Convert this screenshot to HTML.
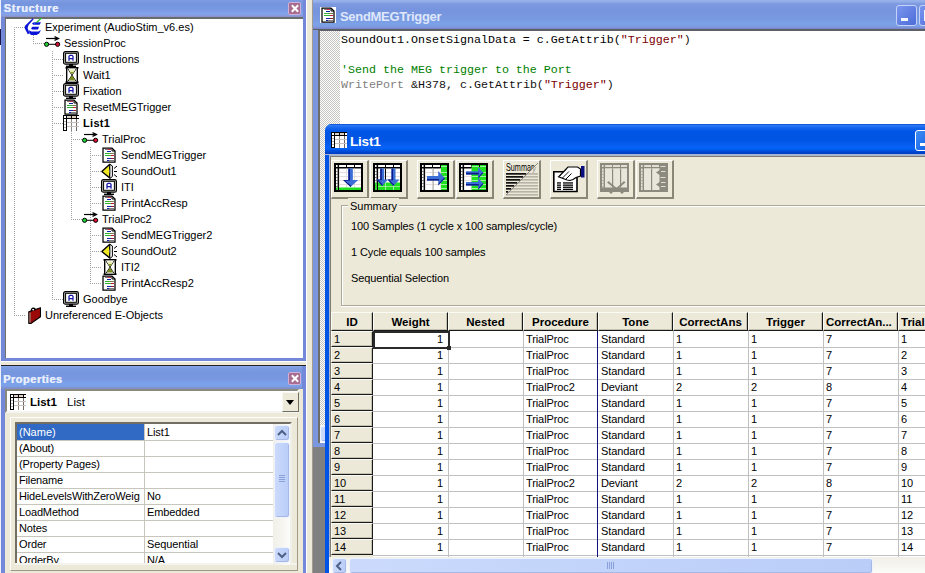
<!DOCTYPE html><html><head><meta charset="utf-8"><style>
*{margin:0;padding:0;box-sizing:border-box}
html,body{width:925px;height:573px;overflow:hidden;background:#ece9d8;font-family:"Liberation Sans", sans-serif;font-size:11px;color:#000}
.a{position:absolute}
.t{position:absolute;white-space:nowrap;line-height:16px}
.dv{position:absolute;width:1px;background:repeating-linear-gradient(to bottom,#a0a0a0 0 1px,transparent 1px 2px)}
.dh{position:absolute;height:1px;background:repeating-linear-gradient(to right,#a0a0a0 0 1px,transparent 1px 2px)}
.ttl{position:absolute;font-weight:bold;color:#e8eefc;white-space:nowrap}
.cls{position:absolute;width:13px;height:13px;background:#a86c90;border:1px solid #d0b0d8;border-radius:2px}
.cls:before,.cls:after{content:"";position:absolute;left:5px;top:1px;width:2px;height:9px;background:#fff;transform:rotate(45deg)}
.cls:after{transform:rotate(-45deg)}
</style></head><body>

<div class="a" style="left:0;top:0;width:1px;height:573px;background:#eef0fc"></div>
<div class="a" style="left:0;top:29px;width:1px;height:16px;background:#181848"></div>
<div class="a" style="left:1px;top:0;width:305px;height:361px;background:#7488da"></div>
<div class="a" style="left:1px;top:0;width:302px;height:17px;background:linear-gradient(#7e9ce2 0,#7594de 4px,#7898e2 10px,#84a4ec 14px,#8898d8 16px,#9090c0 17px)"></div>
<div class="ttl" style="left:3.5px;top:0.5px;font-size:11px;letter-spacing:0.7px;text-shadow:0.5px 0 0 #e4ecfc;line-height:15px">Structure</div>
<div class="cls" style="left:288px;top:2px"></div>
<div class="a" style="left:5px;top:17px;width:298px;height:341px;background:#fff;border-top:2px solid #686c70;border-left:1px solid #707468"></div>
<div class="dh" style="left:14px;top:27px;width:11px"></div>
<div class="a" style="left:22px;top:16px;width:22px;height:22px"><svg width="22" height="22" viewBox="0 0 22 22"><path d="M10.8 2.3 L11.6 3.2 L6.6 9 L5.6 12 L7.5 17.2 L5.8 18.2 L2.8 12.6 L2.8 10 Z" fill="#0a14d8"/><path d="M10 7.3 L12 6.2 H19 L17.6 8.8 H11.2 Z" fill="#0a14d8"/><path d="M12 6.8 L13.6 6.6 L12.6 8 Z" fill="#40a0ff"/><path d="M9 12.3 L10.5 10.8 H17 L16 13.5 H10 Z" fill="#0a14d8"/><path d="M7 14.2 L9.5 15.6 H16.5 L19 14 L17.2 17.6 L14.5 19 H9.2 L7.4 17.6 Z" fill="#0a14d8"/><path d="M13.5 6.6 L18.5 2 H20.5 L15.5 6.6 Z" fill="#30c030"/></svg></div>
<div class="t" style="left:45px;top:19px;">Experiment (AudioStim_v6.es)</div>
<div class="dh" style="left:33px;top:43px;width:11px"></div>
<div class="a" style="left:44px;top:36px;width:17px;height:11px"><svg width="17" height="11" viewBox="0 0 17 11"><path d="M2 2.5 H14.5" stroke="#000" stroke-width="1.2"/><path d="M10.5 0.6 L14.5 2.5 L10.5 4.4" stroke="#000" stroke-width="1.2" fill="none"/><path d="M4 8.3 H12" stroke="#000" stroke-width="1"/><circle cx="2.6" cy="8.3" r="2.1" fill="#20d030" stroke="#000" stroke-width="1"/><circle cx="13.6" cy="8.3" r="2.1" fill="#d81030" stroke="#000" stroke-width="1"/></svg></div>
<div class="t" style="left:64px;top:35px;">SessionProc</div>
<div class="dh" style="left:52px;top:59px;width:11px"></div>
<div class="a" style="left:63px;top:51px;width:16px;height:16px"><svg width="16" height="16" viewBox="0 0 16 16"><rect x="0.6" y="0.6" width="14.8" height="12.6" rx="1.8" fill="#c8c8c0" stroke="#000" stroke-width="1.2"/><rect x="2.6" y="2.3" width="10.8" height="9" fill="#fff" stroke="#000" stroke-width="1"/><path d="M6 9.8 V5.2 L7 4.3 H9 L10 5.2 V9.8 M6 7.6 H10" fill="none" stroke="#1a1aa8" stroke-width="1.3"/><rect x="6" y="13" width="4" height="2" fill="#000"/><rect x="3" y="14.6" width="10" height="1.4" fill="#000"/></svg></div>
<div class="t" style="left:83px;top:51px;">Instructions</div>
<div class="dh" style="left:52px;top:75px;width:11px"></div>
<div class="a" style="left:65px;top:67px;width:14px;height:16px"><svg width="14" height="16" viewBox="0 0 14 16"><rect x="0.5" y="0" width="13" height="1.6" fill="#000"/><rect x="0.5" y="14.4" width="13" height="1.6" fill="#000"/><rect x="1" y="0" width="1.6" height="16" fill="#000"/><rect x="11.4" y="0" width="1.6" height="16" fill="#000"/><rect x="2.6" y="1.6" width="8.8" height="12.8" fill="#fff"/><path d="M3 2 L10.8 14 M11 2 L3.2 14" stroke="#000" stroke-width="0.9"/><path d="M3.6 2.4 H10.4 L7 7.4 Z" fill="#e8ecb0"/><path d="M5 5 H9 L7 7.6 Z" fill="#8a9a30"/><path d="M7 8.6 L10.4 13.6 H3.6 Z" fill="#7a8a20"/></svg></div>
<div class="t" style="left:83px;top:67px;">Wait1</div>
<div class="dh" style="left:52px;top:91px;width:11px"></div>
<div class="a" style="left:63px;top:83px;width:16px;height:16px"><svg width="16" height="16" viewBox="0 0 16 16"><rect x="0.6" y="0.6" width="14.8" height="12.6" rx="1.8" fill="#c8c8c0" stroke="#000" stroke-width="1.2"/><rect x="2.6" y="2.3" width="10.8" height="9" fill="#fff" stroke="#000" stroke-width="1"/><path d="M6 9.8 V5.2 L7 4.3 H9 L10 5.2 V9.8 M6 7.6 H10" fill="none" stroke="#1a1aa8" stroke-width="1.3"/><rect x="6" y="13" width="4" height="2" fill="#000"/><rect x="3" y="14.6" width="10" height="1.4" fill="#000"/></svg></div>
<div class="t" style="left:83px;top:83px;">Fixation</div>
<div class="dh" style="left:52px;top:107px;width:11px"></div>
<div class="a" style="left:64px;top:99px;width:14px;height:16px"><svg width="14" height="16" viewBox="0 0 14 16"><path d="M1 1 H10 L13 4 V15 H1 Z" fill="#fff" stroke="#000" stroke-width="1.25"/><path d="M10 1 V4 H13" fill="none" stroke="#000" stroke-width="1"/><g shape-rendering="crispEdges"><rect x="3" y="2" width="3" height="1" fill="#907070"/><rect x="6" y="2" width="3" height="1" fill="#c03050"/><rect x="5" y="4" width="4" height="1" fill="#1020a0"/><rect x="3" y="6" width="5" height="1" fill="#30b030"/><rect x="8" y="6" width="4" height="1" fill="#708050"/><rect x="3" y="8" width="6" height="1" fill="#30b030"/><rect x="9" y="8" width="3" height="1" fill="#c02030"/><rect x="5" y="11" width="4" height="1" fill="#1020a0"/><rect x="9" y="11" width="3" height="1" fill="#802030"/><rect x="5" y="13" width="2" height="1" fill="#1020a0"/><rect x="7" y="13" width="5" height="1" fill="#808080"/></g></svg></div>
<div class="t" style="left:83px;top:99px;">ResetMEGTrigger</div>
<div class="dh" style="left:52px;top:123px;width:11px"></div>
<div class="a" style="left:63px;top:115px;width:16px;height:16px"><svg width="16" height="16" viewBox="0 0 16 16" shape-rendering="crispEdges"><rect x="0" y="0" width="16" height="16" fill="#fff"/><rect x="0" y="0" width="16" height="1" fill="#000"/><rect x="0" y="3" width="16" height="1" fill="#000"/><rect x="0" y="0" width="1" height="16" fill="#000"/><rect x="3" y="0" width="1" height="16" fill="#000"/><rect x="0" y="15" width="4" height="1" fill="#000"/><rect x="8" y="0" width="1" height="4" fill="#000"/><rect x="13" y="0" width="1" height="4" fill="#000"/><rect x="8" y="4" width="1" height="12" fill="#908880"/><rect x="13" y="4" width="1" height="12" fill="#706860"/><rect x="4" y="1" width="4" height="2" fill="#d8d0c8"/><rect x="9" y="1" width="4" height="2" fill="#e0d0c0"/><rect x="4" y="7" width="12" height="1" fill="#c8c0c0"/><rect x="4" y="11" width="12" height="1" fill="#c8c0c0"/><rect x="1" y="6" width="2" height="1" fill="#b0b0b0"/><rect x="1" y="9" width="2" height="1" fill="#b0b0b0"/><rect x="1" y="12" width="2" height="1" fill="#b0b0b0"/></svg></div>
<div class="t" style="left:83px;top:115px;font-weight:bold;letter-spacing:0.3px;">List1</div>
<div class="dh" style="left:71px;top:139px;width:11px"></div>
<div class="a" style="left:82px;top:132px;width:17px;height:11px"><svg width="17" height="11" viewBox="0 0 17 11"><path d="M2 2.5 H14.5" stroke="#000" stroke-width="1.2"/><path d="M10.5 0.6 L14.5 2.5 L10.5 4.4" stroke="#000" stroke-width="1.2" fill="none"/><path d="M4 8.3 H12" stroke="#000" stroke-width="1"/><circle cx="2.6" cy="8.3" r="2.1" fill="#20d030" stroke="#000" stroke-width="1"/><circle cx="13.6" cy="8.3" r="2.1" fill="#d81030" stroke="#000" stroke-width="1"/></svg></div>
<div class="t" style="left:102px;top:131px;">TrialProc</div>
<div class="dh" style="left:90px;top:155px;width:11px"></div>
<div class="a" style="left:102px;top:147px;width:14px;height:16px"><svg width="14" height="16" viewBox="0 0 14 16"><path d="M1 1 H10 L13 4 V15 H1 Z" fill="#fff" stroke="#000" stroke-width="1.25"/><path d="M10 1 V4 H13" fill="none" stroke="#000" stroke-width="1"/><g shape-rendering="crispEdges"><rect x="3" y="2" width="3" height="1" fill="#907070"/><rect x="6" y="2" width="3" height="1" fill="#c03050"/><rect x="5" y="4" width="4" height="1" fill="#1020a0"/><rect x="3" y="6" width="5" height="1" fill="#30b030"/><rect x="8" y="6" width="4" height="1" fill="#708050"/><rect x="3" y="8" width="6" height="1" fill="#30b030"/><rect x="9" y="8" width="3" height="1" fill="#c02030"/><rect x="5" y="11" width="4" height="1" fill="#1020a0"/><rect x="9" y="11" width="3" height="1" fill="#802030"/><rect x="5" y="13" width="2" height="1" fill="#1020a0"/><rect x="7" y="13" width="5" height="1" fill="#808080"/></g></svg></div>
<div class="t" style="left:121px;top:147px;">SendMEGTrigger</div>
<div class="dh" style="left:90px;top:171px;width:11px"></div>
<div class="a" style="left:101px;top:163px;width:17px;height:16px"><svg width="17" height="16" viewBox="0 0 17 16"><path d="M0.8 8.5 L8.8 1.2 V15 Z" fill="#f0e820" stroke="#000" stroke-width="1.4" stroke-linejoin="bevel"/><path d="M8.8 1.2 L11.4 3 V13.5 L8.8 15.5 Z" fill="#fff" stroke="#000" stroke-width="1"/><ellipse cx="9.3" cy="8.3" rx="0.9" ry="2.4" fill="#a0a0a0"/><path d="M13 5.5 L16 3 M13 8.5 H16 M13 11.5 L16 14" stroke="#000" stroke-width="1"/></svg></div>
<div class="t" style="left:121px;top:163px;">SoundOut1</div>
<div class="dh" style="left:90px;top:187px;width:11px"></div>
<div class="a" style="left:101px;top:179px;width:16px;height:16px"><svg width="16" height="16" viewBox="0 0 16 16"><rect x="0.6" y="0.6" width="14.8" height="12.6" rx="1.8" fill="#c8c8c0" stroke="#000" stroke-width="1.2"/><rect x="2.6" y="2.3" width="10.8" height="9" fill="#fff" stroke="#000" stroke-width="1"/><path d="M6 9.8 V5.2 L7 4.3 H9 L10 5.2 V9.8 M6 7.6 H10" fill="none" stroke="#1a1aa8" stroke-width="1.3"/><rect x="6" y="13" width="4" height="2" fill="#000"/><rect x="3" y="14.6" width="10" height="1.4" fill="#000"/></svg></div>
<div class="t" style="left:121px;top:179px;">ITI</div>
<div class="dh" style="left:90px;top:203px;width:11px"></div>
<div class="a" style="left:102px;top:195px;width:14px;height:16px"><svg width="14" height="16" viewBox="0 0 14 16"><path d="M1 1 H10 L13 4 V15 H1 Z" fill="#fff" stroke="#000" stroke-width="1.25"/><path d="M10 1 V4 H13" fill="none" stroke="#000" stroke-width="1"/><g shape-rendering="crispEdges"><rect x="3" y="2" width="3" height="1" fill="#907070"/><rect x="6" y="2" width="3" height="1" fill="#c03050"/><rect x="5" y="4" width="4" height="1" fill="#1020a0"/><rect x="3" y="6" width="5" height="1" fill="#30b030"/><rect x="8" y="6" width="4" height="1" fill="#708050"/><rect x="3" y="8" width="6" height="1" fill="#30b030"/><rect x="9" y="8" width="3" height="1" fill="#c02030"/><rect x="5" y="11" width="4" height="1" fill="#1020a0"/><rect x="9" y="11" width="3" height="1" fill="#802030"/><rect x="5" y="13" width="2" height="1" fill="#1020a0"/><rect x="7" y="13" width="5" height="1" fill="#808080"/></g></svg></div>
<div class="t" style="left:121px;top:195px;">PrintAccResp</div>
<div class="dh" style="left:71px;top:219px;width:11px"></div>
<div class="a" style="left:82px;top:212px;width:17px;height:11px"><svg width="17" height="11" viewBox="0 0 17 11"><path d="M2 2.5 H14.5" stroke="#000" stroke-width="1.2"/><path d="M10.5 0.6 L14.5 2.5 L10.5 4.4" stroke="#000" stroke-width="1.2" fill="none"/><path d="M4 8.3 H12" stroke="#000" stroke-width="1"/><circle cx="2.6" cy="8.3" r="2.1" fill="#20d030" stroke="#000" stroke-width="1"/><circle cx="13.6" cy="8.3" r="2.1" fill="#d81030" stroke="#000" stroke-width="1"/></svg></div>
<div class="t" style="left:102px;top:211px;">TrialProc2</div>
<div class="dh" style="left:90px;top:235px;width:11px"></div>
<div class="a" style="left:102px;top:227px;width:14px;height:16px"><svg width="14" height="16" viewBox="0 0 14 16"><path d="M1 1 H10 L13 4 V15 H1 Z" fill="#fff" stroke="#000" stroke-width="1.25"/><path d="M10 1 V4 H13" fill="none" stroke="#000" stroke-width="1"/><g shape-rendering="crispEdges"><rect x="3" y="2" width="3" height="1" fill="#907070"/><rect x="6" y="2" width="3" height="1" fill="#c03050"/><rect x="5" y="4" width="4" height="1" fill="#1020a0"/><rect x="3" y="6" width="5" height="1" fill="#30b030"/><rect x="8" y="6" width="4" height="1" fill="#708050"/><rect x="3" y="8" width="6" height="1" fill="#30b030"/><rect x="9" y="8" width="3" height="1" fill="#c02030"/><rect x="5" y="11" width="4" height="1" fill="#1020a0"/><rect x="9" y="11" width="3" height="1" fill="#802030"/><rect x="5" y="13" width="2" height="1" fill="#1020a0"/><rect x="7" y="13" width="5" height="1" fill="#808080"/></g></svg></div>
<div class="t" style="left:121px;top:227px;">SendMEGTrigger2</div>
<div class="dh" style="left:90px;top:251px;width:11px"></div>
<div class="a" style="left:101px;top:243px;width:17px;height:16px"><svg width="17" height="16" viewBox="0 0 17 16"><path d="M0.8 8.5 L8.8 1.2 V15 Z" fill="#f0e820" stroke="#000" stroke-width="1.4" stroke-linejoin="bevel"/><path d="M8.8 1.2 L11.4 3 V13.5 L8.8 15.5 Z" fill="#fff" stroke="#000" stroke-width="1"/><ellipse cx="9.3" cy="8.3" rx="0.9" ry="2.4" fill="#a0a0a0"/><path d="M13 5.5 L16 3 M13 8.5 H16 M13 11.5 L16 14" stroke="#000" stroke-width="1"/></svg></div>
<div class="t" style="left:121px;top:243px;">SoundOut2</div>
<div class="dh" style="left:90px;top:267px;width:11px"></div>
<div class="a" style="left:103px;top:259px;width:14px;height:16px"><svg width="14" height="16" viewBox="0 0 14 16"><rect x="0.5" y="0" width="13" height="1.6" fill="#000"/><rect x="0.5" y="14.4" width="13" height="1.6" fill="#000"/><rect x="1" y="0" width="1.6" height="16" fill="#000"/><rect x="11.4" y="0" width="1.6" height="16" fill="#000"/><rect x="2.6" y="1.6" width="8.8" height="12.8" fill="#fff"/><path d="M3 2 L10.8 14 M11 2 L3.2 14" stroke="#000" stroke-width="0.9"/><path d="M3.6 2.4 H10.4 L7 7.4 Z" fill="#e8ecb0"/><path d="M5 5 H9 L7 7.6 Z" fill="#8a9a30"/><path d="M7 8.6 L10.4 13.6 H3.6 Z" fill="#7a8a20"/></svg></div>
<div class="t" style="left:121px;top:259px;">ITI2</div>
<div class="dh" style="left:90px;top:283px;width:11px"></div>
<div class="a" style="left:102px;top:275px;width:14px;height:16px"><svg width="14" height="16" viewBox="0 0 14 16"><path d="M1 1 H10 L13 4 V15 H1 Z" fill="#fff" stroke="#000" stroke-width="1.25"/><path d="M10 1 V4 H13" fill="none" stroke="#000" stroke-width="1"/><g shape-rendering="crispEdges"><rect x="3" y="2" width="3" height="1" fill="#907070"/><rect x="6" y="2" width="3" height="1" fill="#c03050"/><rect x="5" y="4" width="4" height="1" fill="#1020a0"/><rect x="3" y="6" width="5" height="1" fill="#30b030"/><rect x="8" y="6" width="4" height="1" fill="#708050"/><rect x="3" y="8" width="6" height="1" fill="#30b030"/><rect x="9" y="8" width="3" height="1" fill="#c02030"/><rect x="5" y="11" width="4" height="1" fill="#1020a0"/><rect x="9" y="11" width="3" height="1" fill="#802030"/><rect x="5" y="13" width="2" height="1" fill="#1020a0"/><rect x="7" y="13" width="5" height="1" fill="#808080"/></g></svg></div>
<div class="t" style="left:121px;top:275px;">PrintAccResp2</div>
<div class="dh" style="left:52px;top:299px;width:11px"></div>
<div class="a" style="left:63px;top:291px;width:16px;height:16px"><svg width="16" height="16" viewBox="0 0 16 16"><rect x="0.6" y="0.6" width="14.8" height="12.6" rx="1.8" fill="#c8c8c0" stroke="#000" stroke-width="1.2"/><rect x="2.6" y="2.3" width="10.8" height="9" fill="#fff" stroke="#000" stroke-width="1"/><path d="M6 9.8 V5.2 L7 4.3 H9 L10 5.2 V9.8 M6 7.6 H10" fill="none" stroke="#1a1aa8" stroke-width="1.3"/><rect x="6" y="13" width="4" height="2" fill="#000"/><rect x="3" y="14.6" width="10" height="1.4" fill="#000"/></svg></div>
<div class="t" style="left:83px;top:291px;">Goodbye</div>
<div class="dh" style="left:14px;top:315px;width:11px"></div>
<div class="a" style="left:25px;top:307px;width:16px;height:17px"><svg width="16" height="17" viewBox="0 0 16 17"><path d="M3.8 4.8 L15.5 0.8 V9.8 L5.8 16.5 H3.8 Z" fill="#9a0808" stroke="#000" stroke-width="1.1" stroke-linejoin="round"/><path d="M5 5.6 V15.6" stroke="#98a898" stroke-width="1"/><path d="M6.3 4.2 Q6.2 1 8.8 1.2 Q10.5 1.6 10 3.2" fill="none" stroke="#000" stroke-width="1.4"/><circle cx="8.2" cy="2.8" r="0.8" fill="#fff"/></svg></div>
<div class="t" style="left:45px;top:307px;">Unreferenced E-Objects</div>
<div class="dv" style="left:14px;top:27px;height:288px"></div>
<div class="dv" style="left:33px;top:35px;height:8px"></div>
<div class="dv" style="left:52px;top:51px;height:248px"></div>
<div class="dv" style="left:71px;top:131px;height:88px"></div>
<div class="dv" style="left:90px;top:147px;height:136px"></div>
<div class="a" style="left:1px;top:361px;width:305px;height:5px;background:#ece9d8;border-top:1px solid #fff;border-bottom:1px solid #222"></div>
<div class="a" style="left:1px;top:366px;width:305px;height:207px;background:#7488da"></div>
<div class="a" style="left:1px;top:366px;width:301px;height:23px;background:linear-gradient(#8aa8e8 0,#7d9ce2 2px,#7696de 6px,#7898e2 14px,#7aa4ec 18px,#7ca0ea 20px,#8090c8 22px,#8090c8 23px)"></div>
<div class="ttl" style="left:3px;top:371.5px;font-size:11px;letter-spacing:0.5px;text-shadow:0.5px 0 0 #e4ecfc;line-height:15px">Properties</div>
<div class="cls" style="left:288px;top:372px"></div>
<div class="a" style="left:5px;top:389px;width:298px;height:184px;background:#ece9d8"></div>
<div class="a" style="left:5px;top:389px;width:294px;height:24px;background:#fff;border:2px solid #8a8a80;border-right-color:#f4f4f0;border-bottom-color:#f4f4f0"></div>
<div class="a" style="left:10px;top:394px;width:16px;height:16px"><svg width="16" height="16" viewBox="0 0 16 16" shape-rendering="crispEdges"><rect x="0" y="0" width="16" height="16" fill="#fff"/><rect x="0" y="0" width="16" height="1" fill="#000"/><rect x="0" y="3" width="16" height="1" fill="#000"/><rect x="0" y="0" width="1" height="16" fill="#000"/><rect x="3" y="0" width="1" height="16" fill="#000"/><rect x="0" y="15" width="4" height="1" fill="#000"/><rect x="8" y="0" width="1" height="4" fill="#000"/><rect x="13" y="0" width="1" height="4" fill="#000"/><rect x="8" y="4" width="1" height="12" fill="#908880"/><rect x="13" y="4" width="1" height="12" fill="#706860"/><rect x="4" y="1" width="4" height="2" fill="#d8d0c8"/><rect x="9" y="1" width="4" height="2" fill="#e0d0c0"/><rect x="4" y="7" width="12" height="1" fill="#c8c0c0"/><rect x="4" y="11" width="12" height="1" fill="#c8c0c0"/><rect x="1" y="6" width="2" height="1" fill="#b0b0b0"/><rect x="1" y="9" width="2" height="1" fill="#b0b0b0"/><rect x="1" y="12" width="2" height="1" fill="#b0b0b0"/></svg></div>
<div class="t" style="left:30px;top:394px;font-weight:bold;font-size:11.5px">List1</div>
<div class="t" style="left:67px;top:394px;font-size:11.5px">List</div>
<div class="a" style="left:282px;top:392px;width:17px;height:20px;background:#ece9d8;border:1px solid #f8f8f4;border-right-color:#716f64;border-bottom-color:#716f64"></div>
<div class="a" style="left:286px;top:400px;width:0;height:0;border-left:4.5px solid transparent;border-right:4.5px solid transparent;border-top:5px solid #000"></div>
<div class="a" style="left:10px;top:417px;width:288px;height:154px;border:1px solid #fff;border-right-color:#9c988a;border-bottom-color:#9c988a"></div>
<div class="a" style="left:15px;top:422px;width:277px;height:143px;background:#fff;border:2px solid #716f64;border-right-color:#f0f0ea;border-bottom-color:#f0f0ea"></div>
<div class="a" style="left:17px;top:424px;width:127px;height:16px;background:#316ac5"></div>
<div class="t" style="left:19px;top:424px;color:#fff">(Name)</div>
<div class="t" style="left:147px;top:424px;letter-spacing:-0.1px">List1</div>
<div class="a" style="left:17px;top:440px;width:256px;height:1px;background:#c8c6bc"></div>
<div class="t" style="left:19px;top:440px;letter-spacing:-0.15px">(About)</div>
<div class="t" style="left:147px;top:440px;letter-spacing:-0.1px"></div>
<div class="a" style="left:17px;top:456px;width:256px;height:1px;background:#c8c6bc"></div>
<div class="t" style="left:19px;top:456px;letter-spacing:-0.15px">(Property Pages)</div>
<div class="t" style="left:147px;top:456px;letter-spacing:-0.1px"></div>
<div class="a" style="left:17px;top:472px;width:256px;height:1px;background:#c8c6bc"></div>
<div class="t" style="left:19px;top:472px;letter-spacing:-0.15px">Filename</div>
<div class="t" style="left:147px;top:472px;letter-spacing:-0.1px"></div>
<div class="a" style="left:17px;top:488px;width:256px;height:1px;background:#c8c6bc"></div>
<div class="t" style="left:19px;top:488px;letter-spacing:-0.15px">HideLevelsWithZeroWeig</div>
<div class="t" style="left:147px;top:488px;letter-spacing:-0.1px">No</div>
<div class="a" style="left:17px;top:504px;width:256px;height:1px;background:#c8c6bc"></div>
<div class="t" style="left:19px;top:504px;letter-spacing:-0.15px">LoadMethod</div>
<div class="t" style="left:147px;top:504px;letter-spacing:-0.1px">Embedded</div>
<div class="a" style="left:17px;top:520px;width:256px;height:1px;background:#c8c6bc"></div>
<div class="t" style="left:19px;top:520px;letter-spacing:-0.15px">Notes</div>
<div class="t" style="left:147px;top:520px;letter-spacing:-0.1px"></div>
<div class="a" style="left:17px;top:536px;width:256px;height:1px;background:#c8c6bc"></div>
<div class="t" style="left:19px;top:536px;letter-spacing:-0.15px">Order</div>
<div class="t" style="left:147px;top:536px;letter-spacing:-0.1px">Sequential</div>
<div class="a" style="left:17px;top:552px;width:256px;height:1px;background:#c8c6bc"></div>
<div class="t" style="left:19px;top:552px;letter-spacing:-0.15px">OrderBy</div>
<div class="t" style="left:147px;top:552px;letter-spacing:-0.1px">N/A</div>
<div class="a" style="left:17px;top:568px;width:256px;height:1px;background:#c8c6bc"></div>
<div class="a" style="left:144px;top:424px;width:1px;height:140px;background:#c8c6bc"></div>
<div class="a" style="left:15px;top:563px;width:282px;height:2px;background:#f4f3ee"></div>
<div class="a" style="left:11px;top:565px;width:286px;height:5px;background:#ece9d8"></div>
<div class="a" style="left:273px;top:424px;width:17px;height:141px;background:linear-gradient(90deg,#f0efe8,#fbfbf8)"></div>
<div class="a" style="left:274px;top:425px;width:16px;height:16px;background:linear-gradient(90deg,#cbdafc,#b9cdf8);border:1px solid #eef2fd;border-radius:3px;box-shadow:inset -1px -1px 0 #a6b9e6"></div>
<svg class="a" style="left:274px;top:425px" width="16" height="16"><path d="M4 10 L8 6 L12 10" fill="none" stroke="#4d6185" stroke-width="2"/></svg>
<div class="a" style="left:274px;top:442px;width:16px;height:76px;background:linear-gradient(90deg,#cbdafc,#b9cdf8);border:1px solid #eef2fd;border-radius:3px;box-shadow:inset -1px -1px 0 #a6b9e6"></div>
<svg class="a" style="left:274px;top:442px" width="16" height="76"><path d="M5 33.5 H11 M5 35.5 H11 M5 37.5 H11 M5 39.5 H11" stroke="#8aa0d8" stroke-width="1"/></svg>
<div class="a" style="left:274px;top:547px;width:16px;height:16px;background:linear-gradient(90deg,#cbdafc,#b9cdf8);border:1px solid #eef2fd;border-radius:3px;box-shadow:inset -1px -1px 0 #a6b9e6"></div>
<svg class="a" style="left:274px;top:547px" width="16" height="16"><path d="M4 6 L8 10 L12 6" fill="none" stroke="#4d6185" stroke-width="2"/></svg>
<div class="a" style="left:306px;top:0;width:7px;height:573px;background:#ece9d8;border-left:1px solid #fff"></div>
<div class="a" style="left:312px;top:0;width:1px;height:573px;background:#a09d90"></div>
<div class="a" style="left:313px;top:0;width:612px;height:573px;background:#808080"></div>
<div class="a" style="left:313px;top:0;width:612px;height:447px;background:#7b97df"></div>
<div class="a" style="left:313px;top:0;width:612px;height:30px;background:linear-gradient(#9ab2ec 0,#94aeea 1.5px,#7d99e0 4px,#7694de 10px,#7898e0 18px,#7ca2e8 24px,#7e9ae0 27px,#7886cc 28.5px,#5e6068 29.5px,#5e6068 30px)"></div>
<div class="a" style="left:320px;top:7px;width:16px;height:16px;background:#fff"></div>
<div class="a" style="left:321px;top:7px;width:14px;height:16px"><svg width="14" height="16" viewBox="0 0 14 16"><path d="M1 1 H10 L13 4 V15 H1 Z" fill="#fff" stroke="#000" stroke-width="1.25"/><path d="M10 1 V4 H13" fill="none" stroke="#000" stroke-width="1"/><g shape-rendering="crispEdges"><rect x="3" y="2" width="3" height="1" fill="#907070"/><rect x="6" y="2" width="3" height="1" fill="#c03050"/><rect x="5" y="4" width="4" height="1" fill="#1020a0"/><rect x="3" y="6" width="5" height="1" fill="#30b030"/><rect x="8" y="6" width="4" height="1" fill="#708050"/><rect x="3" y="8" width="6" height="1" fill="#30b030"/><rect x="9" y="8" width="3" height="1" fill="#c02030"/><rect x="5" y="11" width="4" height="1" fill="#1020a0"/><rect x="9" y="11" width="3" height="1" fill="#802030"/><rect x="5" y="13" width="2" height="1" fill="#1020a0"/><rect x="7" y="13" width="5" height="1" fill="#808080"/></g></svg></div>
<div class="ttl" style="left:340px;top:9px;font-size:13px;letter-spacing:-0.3px;line-height:15px;color:#dfe7fb">SendMEGTrigger</div>
<div class="a" style="left:896px;top:5px;width:21px;height:21px;background:linear-gradient(135deg,#7a96ee,#4c6cd8);border:1px solid #c4d2fa;border-radius:3px"></div>
<div class="a" style="left:901px;top:18px;width:7px;height:3px;background:#f4f6ff"></div>
<div class="a" style="left:919px;top:5px;width:21px;height:21px;background:linear-gradient(135deg,#7a96ee,#4c6cd8);border:1px solid #c4d2fa;border-radius:3px"></div>
<div class="a" style="left:924px;top:10px;width:1px;height:11px;background:#f4f6ff"></div>
<div class="a" style="left:318px;top:30px;width:607px;height:413px;background:#fff;border-left:2px solid #6e6e6a;border-top:1px solid #5e6068"></div>
<div class="a" style="left:320px;top:31px;width:20px;height:394px;background:repeating-conic-gradient(#c4c4c0 0 25%,#fff 0 50%) 0 0/2px 2px"></div>
<div class="a" style="left:341px;top:33px;font-family:'Liberation Mono', monospace;font-size:11.67px;line-height:15px;white-space:pre;color:#111"><span style="color:#000">SoundOut1.OnsetSignalData = c.GetAttrib(</span><span style="color:#7a0000">"Trigger"</span><span>)</span></div>
<div class="a" style="left:341px;top:48px;font-family:'Liberation Mono', monospace;font-size:11.67px;line-height:15px;white-space:pre;color:#111"></div>
<div class="a" style="left:341px;top:63px;font-family:'Liberation Mono', monospace;font-size:11.67px;line-height:15px;white-space:pre;color:#111"><span style="color:#008000">'Send the MEG trigger to the Port</span></div>
<div class="a" style="left:341px;top:78px;font-family:'Liberation Mono', monospace;font-size:11.67px;line-height:15px;white-space:pre;color:#111"><span style="color:#808080">WritePort</span> &amp;H378, c.GetAttrib(<span style="color:#7a0000">"Trigger"</span>)</div>
<div class="a" style="left:320px;top:425px;width:605px;height:17px;background:#f4f3ee"></div>
<div class="a" style="left:320px;top:426px;width:16px;height:16px;background:linear-gradient(90deg,#cbdafc,#b9cdf8);border:1px solid #eef2fd;border-radius:3px;box-shadow:inset -1px -1px 0 #a6b9e6"></div>
<div class="a" style="left:325px;top:124px;width:600px;height:449px;background:#0053e4;border-radius:7px 0 0 0"></div>
<div class="a" style="left:325px;top:124px;width:600px;height:31px;border-radius:7px 0 0 0;background:linear-gradient(#0a44c8 0,#2a7af8 1.5px,#1a6af0 3px,#0056e6 7px,#0054e3 16px,#0862f6 23px,#0060f4 25px,#0046d0 28px,#0040c4 29.5px,#a8b4d0 30px,#a8b4d0 31px)"></div>
<div class="a" style="left:331px;top:132px;width:16px;height:16px"><svg width="16" height="16" viewBox="0 0 16 16" shape-rendering="crispEdges"><rect x="0" y="0" width="16" height="16" fill="#fff"/><rect x="0" y="0" width="16" height="1" fill="#000"/><rect x="0" y="3" width="16" height="1" fill="#000"/><rect x="0" y="0" width="1" height="16" fill="#000"/><rect x="3" y="0" width="1" height="16" fill="#000"/><rect x="0" y="15" width="4" height="1" fill="#000"/><rect x="8" y="0" width="1" height="4" fill="#000"/><rect x="13" y="0" width="1" height="4" fill="#000"/><rect x="8" y="4" width="1" height="12" fill="#908880"/><rect x="13" y="4" width="1" height="12" fill="#706860"/><rect x="4" y="1" width="4" height="2" fill="#d8d0c8"/><rect x="9" y="1" width="4" height="2" fill="#e0d0c0"/><rect x="4" y="7" width="12" height="1" fill="#c8c0c0"/><rect x="4" y="11" width="12" height="1" fill="#c8c0c0"/><rect x="1" y="6" width="2" height="1" fill="#b0b0b0"/><rect x="1" y="9" width="2" height="1" fill="#b0b0b0"/><rect x="1" y="12" width="2" height="1" fill="#b0b0b0"/></svg></div>
<div class="ttl" style="left:350px;top:134px;font-size:13.5px;letter-spacing:-0.2px;line-height:16px;color:#fff">List1</div>
<div class="a" style="left:915px;top:130px;width:21px;height:21px;background:linear-gradient(135deg,#3f8cf3,#0d5ae6);border:1px solid #fff;border-radius:3px"></div>
<div class="a" style="left:920px;top:143px;width:8px;height:3px;background:#fff"></div>
<div class="a" style="left:329px;top:155px;width:596px;height:418px;background:#ece9d8;border-left:1px solid #a8b4d0;border-top:1px solid #a8b4d0;box-shadow:inset 1px 1px 0 #807c70"></div>
<div class="a" style="left:331px;top:160px;width:38px;height:39px;background:#ece9d8;border:1px solid #fff;border-right:2px solid #8a8678;border-bottom:2px solid #8a8678"></div>
<div class="a" style="left:334px;top:163px;width:29px;height:29px"><svg width="29" height="29" viewBox="0 0 29 29" shape-rendering="auto"><rect x="0" y="0" width="29" height="29" fill="#000"/><rect x="2" y="2" width="25" height="25" fill="#fff"/><rect x="2" y="4" width="25" height="1.5" fill="#000"/><rect x="3.6" y="2" width="1.5" height="25" fill="#000"/><rect x="12" y="2" width="1" height="2" fill="#000"/><rect x="20" y="2" width="1" height="2" fill="#000"/><rect x="2" y="8" width="1.6" height="0.8" fill="#000" opacity="0.6"/><rect x="2" y="11" width="1.6" height="0.8" fill="#000" opacity="0.6"/><rect x="2" y="14" width="1.6" height="0.8" fill="#000" opacity="0.6"/><rect x="2" y="17" width="1.6" height="0.8" fill="#000" opacity="0.6"/><rect x="2" y="20" width="1.6" height="0.8" fill="#000" opacity="0.6"/><rect x="2" y="23" width="1.6" height="0.8" fill="#000" opacity="0.6"/><rect x="5" y="9" width="22" height="0.8" fill="#e0d4d4"/><rect x="5" y="13" width="22" height="0.8" fill="#e0d4d4"/><rect x="5" y="17" width="22" height="0.8" fill="#e0d4d4"/><rect x="5" y="21" width="22" height="0.8" fill="#e0d4d4"/><rect x="12" y="5.5" width="0.8" height="21.5" fill="#ddd"/><rect x="20" y="5.5" width="0.8" height="21.5" fill="#ddd"/><rect x="5" y="24.5" width="22" height="2.5" fill="#1ee01e"/><rect x="2" y="24.5" width="1.6" height="2.5" fill="#1ee01e"/><path d="M14.350000000000001 5.5 H18.85 V17 H24.1 L16.6 24 L9.100000000000001 17 H14.350000000000001 Z" fill="#3b6fd6"/><path d="M14.350000000000001 5.5 V17 H9.100000000000001 L16.6 24 L17.200000000000003 22.8 L11.100000000000001 17.8 H15.950000000000001 V5.5 Z" fill="#0c1b8a"/></svg></div>
<div class="a" style="left:370px;top:160px;width:38px;height:39px;background:#ece9d8;border:1px solid #fff;border-right:2px solid #8a8678;border-bottom:2px solid #8a8678"></div>
<div class="a" style="left:373px;top:163px;width:29px;height:29px"><svg width="29" height="29" viewBox="0 0 29 29" shape-rendering="auto"><rect x="0" y="0" width="29" height="29" fill="#000"/><rect x="2" y="2" width="25" height="25" fill="#fff"/><rect x="2" y="4" width="25" height="1.5" fill="#000"/><rect x="3.6" y="2" width="1.5" height="25" fill="#000"/><rect x="12" y="2" width="1" height="2" fill="#000"/><rect x="20" y="2" width="1" height="2" fill="#000"/><rect x="2" y="8" width="1.6" height="0.8" fill="#000" opacity="0.6"/><rect x="2" y="11" width="1.6" height="0.8" fill="#000" opacity="0.6"/><rect x="2" y="14" width="1.6" height="0.8" fill="#000" opacity="0.6"/><rect x="2" y="17" width="1.6" height="0.8" fill="#000" opacity="0.6"/><rect x="2" y="20" width="1.6" height="0.8" fill="#000" opacity="0.6"/><rect x="2" y="23" width="1.6" height="0.8" fill="#000" opacity="0.6"/><rect x="5" y="9" width="22" height="0.8" fill="#e0d4d4"/><rect x="5" y="13" width="22" height="0.8" fill="#e0d4d4"/><rect x="5" y="17" width="22" height="0.8" fill="#e0d4d4"/><rect x="5" y="21" width="22" height="0.8" fill="#e0d4d4"/><rect x="12" y="5.5" width="0.8" height="21.5" fill="#ddd"/><rect x="20" y="5.5" width="0.8" height="21.5" fill="#ddd"/><rect x="5" y="19.5" width="22" height="7.5" fill="#1ee01e"/><rect x="2" y="19.5" width="1.6" height="7.5" fill="#1ee01e"/><rect x="12" y="19.5" width="0.8" height="7.5" fill="#b8f0b8"/><rect x="20" y="19.5" width="0.8" height="7.5" fill="#b8f0b8"/><rect x="5" y="23" width="22" height="0.7" fill="#b8f0b8"/><rect x="12" y="5.5" width="1" height="12" fill="#000"/><rect x="20" y="5.5" width="1" height="12" fill="#000"/><path d="M7.199999999999999 5.5 H11.2 V16.5 H15.0 L9.2 23 L3.3999999999999995 16.5 H7.199999999999999 Z" fill="#3b6fd6"/><path d="M7.199999999999999 5.5 V16.5 H3.3999999999999995 L9.2 23 L9.799999999999999 21.8 L5.3999999999999995 17.3 H8.799999999999999 V5.5 Z" fill="#0c1b8a"/><path d="M18.5 5.5 H22.5 V16.5 H26.5 L20.5 23 L14.5 16.5 H18.5 Z" fill="#3b6fd6"/><path d="M18.5 5.5 V16.5 H14.5 L20.5 23 L21.1 21.8 L16.5 17.3 H20.1 V5.5 Z" fill="#0c1b8a"/></svg></div>
<div class="a" style="left:417px;top:160px;width:38px;height:39px;background:#ece9d8;border:1px solid #fff;border-right:2px solid #8a8678;border-bottom:2px solid #8a8678"></div>
<div class="a" style="left:420px;top:163px;width:29px;height:29px"><svg width="29" height="29" viewBox="0 0 29 29" shape-rendering="auto"><rect x="0" y="0" width="29" height="29" fill="#000"/><rect x="2" y="2" width="25" height="25" fill="#fff"/><rect x="2" y="4" width="25" height="1.5" fill="#000"/><rect x="3.6" y="2" width="1.5" height="25" fill="#000"/><rect x="12" y="2" width="1" height="2" fill="#000"/><rect x="20" y="2" width="1" height="2" fill="#000"/><rect x="2" y="8" width="1.6" height="0.8" fill="#000" opacity="0.6"/><rect x="2" y="11" width="1.6" height="0.8" fill="#000" opacity="0.6"/><rect x="2" y="14" width="1.6" height="0.8" fill="#000" opacity="0.6"/><rect x="2" y="17" width="1.6" height="0.8" fill="#000" opacity="0.6"/><rect x="2" y="20" width="1.6" height="0.8" fill="#000" opacity="0.6"/><rect x="2" y="23" width="1.6" height="0.8" fill="#000" opacity="0.6"/><rect x="5" y="9" width="22" height="0.8" fill="#e0d4d4"/><rect x="5" y="13" width="22" height="0.8" fill="#e0d4d4"/><rect x="5" y="17" width="22" height="0.8" fill="#e0d4d4"/><rect x="5" y="21" width="22" height="0.8" fill="#e0d4d4"/><rect x="12" y="5.5" width="0.8" height="21.5" fill="#ddd"/><rect x="20" y="5.5" width="0.8" height="21.5" fill="#ddd"/><rect x="12.8" y="5.5" width="0.8" height="21.5" fill="#a09890"/><rect x="21" y="2" width="6" height="25" fill="#1ee01e"/><rect x="21" y="3" width="6" height="0.8" fill="#c0f4c0"/><rect x="21" y="9" width="6" height="0.8" fill="#c0f4c0"/><rect x="21" y="13" width="6" height="0.8" fill="#c0f4c0"/><rect x="21" y="17" width="6" height="0.8" fill="#c0f4c0"/><rect x="21" y="21" width="6" height="0.8" fill="#c0f4c0"/><rect x="21" y="25" width="6" height="0.8" fill="#c0f4c0"/><path d="M7 13.100000000000001 H18.2 V8.0 L25 15.3 L18.2 22.6 V17.5 H7 Z" fill="#3b6fd6"/><path d="M7 15.9 H19.0 V17.5 H7 Z M18.2 22.6 L25 15.3 L23.8 15.0 L18.8 20.6 Z" fill="#0c1b8a"/></svg></div>
<div class="a" style="left:456px;top:160px;width:38px;height:39px;background:#ece9d8;border:1px solid #fff;border-right:2px solid #8a8678;border-bottom:2px solid #8a8678"></div>
<div class="a" style="left:459px;top:163px;width:29px;height:29px"><svg width="29" height="29" viewBox="0 0 29 29" shape-rendering="auto"><rect x="0" y="0" width="29" height="29" fill="#000"/><rect x="2" y="2" width="25" height="25" fill="#fff"/><rect x="2" y="4" width="25" height="1.5" fill="#000"/><rect x="3.6" y="2" width="1.5" height="25" fill="#000"/><rect x="12" y="2" width="1" height="2" fill="#000"/><rect x="20" y="2" width="1" height="2" fill="#000"/><rect x="2" y="8" width="1.6" height="0.8" fill="#000" opacity="0.6"/><rect x="2" y="11" width="1.6" height="0.8" fill="#000" opacity="0.6"/><rect x="2" y="14" width="1.6" height="0.8" fill="#000" opacity="0.6"/><rect x="2" y="17" width="1.6" height="0.8" fill="#000" opacity="0.6"/><rect x="2" y="20" width="1.6" height="0.8" fill="#000" opacity="0.6"/><rect x="2" y="23" width="1.6" height="0.8" fill="#000" opacity="0.6"/><rect x="5" y="9" width="22" height="0.8" fill="#e0d4d4"/><rect x="5" y="13" width="22" height="0.8" fill="#e0d4d4"/><rect x="5" y="17" width="22" height="0.8" fill="#e0d4d4"/><rect x="5" y="21" width="22" height="0.8" fill="#e0d4d4"/><rect x="12" y="5.5" width="0.8" height="21.5" fill="#ddd"/><rect x="20" y="5.5" width="0.8" height="21.5" fill="#ddd"/><rect x="12.6" y="2" width="14.4" height="25" fill="#1ee01e"/><rect x="12.6" y="3" width="14.4" height="0.8" fill="#c0f4c0"/><rect x="12.6" y="9" width="14.4" height="0.8" fill="#c0f4c0"/><rect x="12.6" y="13" width="14.4" height="0.8" fill="#c0f4c0"/><rect x="12.6" y="17" width="14.4" height="0.8" fill="#c0f4c0"/><rect x="12.6" y="21" width="14.4" height="0.8" fill="#c0f4c0"/><rect x="12.6" y="25" width="14.4" height="0.8" fill="#c0f4c0"/><rect x="20" y="2" width="1" height="2" fill="#000"/><path d="M7 8.200000000000001 H19.0 V4.000000000000001 L24.5 9.8 L19.0 15.600000000000001 V11.4 H7 Z" fill="#3b6fd6"/><path d="M7 9.8 H19.8 V11.4 H7 Z M19.0 15.600000000000001 L24.5 9.8 L23.3 9.5 L19.6 13.600000000000001 Z" fill="#0c1b8a"/><path d="M7 18.9 H19.0 V14.7 L24.5 20.7 L19.0 26.7 V22.5 H7 Z" fill="#3b6fd6"/><path d="M7 20.9 H19.8 V22.5 H7 Z M19.0 26.7 L24.5 20.7 L23.3 20.4 L19.6 24.7 Z" fill="#0c1b8a"/></svg></div>
<div class="a" style="left:503px;top:160px;width:38px;height:39px;background:#ece9d8;border:1px solid #fff;border-right:2px solid #8a8678;border-bottom:2px solid #8a8678"></div>
<div class="a" style="left:506px;top:163px;width:33px;height:33px"><svg width="33" height="33" viewBox="0 0 33 33" shape-rendering="auto"><text x="0" y="8" font-family="Liberation Sans" font-size="10.5" font-weight="normal" fill="#000" textLength="31" lengthAdjust="spacingAndGlyphs">Summary</text><path d="M32 0 L32 33 L0 33 Z" fill="#ece9d8"/><rect x="0" y="10.3" width="32" height="1.3" fill="#aaa69a"/><rect x="0" y="13.2" width="32" height="1.3" fill="#aaa69a"/><rect x="0" y="16.2" width="32" height="1.3" fill="#aaa69a"/><rect x="0" y="19.2" width="32" height="1.3" fill="#aaa69a"/><rect x="0" y="22.2" width="32" height="1.3" fill="#aaa69a"/><rect x="0" y="25.2" width="32" height="1.3" fill="#aaa69a"/><rect x="0" y="28.2" width="32" height="1.3" fill="#aaa69a"/><rect x="0" y="31.2" width="32" height="1.3" fill="#aaa69a"/><rect x="0" y="10.1" width="20" height="1.5" fill="#000"/><rect x="0" y="13.1" width="17" height="1.5" fill="#000"/><rect x="0" y="16.1" width="14" height="1.5" fill="#000"/><rect x="0" y="19.1" width="11" height="1.5" fill="#000"/><rect x="0" y="22.1" width="8" height="1.5" fill="#000"/><rect x="0" y="25.1" width="5" height="1.5" fill="#000"/><rect x="0" y="28.1" width="2" height="1.5" fill="#000"/><path d="M32 0 L0 32" stroke="#666" stroke-width="0.7"/><text x="26" y="8" font-family="Liberation Sans" font-size="8" fill="#999">y</text></svg></div>
<div class="a" style="left:550px;top:160px;width:38px;height:39px;background:#ece9d8;border:1px solid #fff;border-right:2px solid #8a8678;border-bottom:2px solid #8a8678"></div>
<div class="a" style="left:553px;top:163px;width:33px;height:33px"><svg width="33" height="33" viewBox="0 0 33 33" shape-rendering="auto"><path d="M0.8 8.8 H24 V28.5 H0.8 Z" fill="#fff" stroke="#000" stroke-width="1.6"/><path d="M5.5 13.8 L15 4 H24.5 L27.5 6 V13 L23 14.5 L20 16.5 L17 17.5 L14 17 Z" fill="#fff" stroke="#000" stroke-width="1.2"/><path d="M7 13 L13.5 6.5 M9.5 15 L16 8.5 M12.5 16.5 L18.5 10.5" stroke="#000" stroke-width="1"/><path d="M8 12.5 L14 6.5 M11 14.5 L17 8.5 M14 16 L19.5 10.5" stroke="#fff" stroke-width="0.5"/><rect x="28" y="3" width="3.5" height="11.5" fill="#0a0f80"/><rect x="4" y="19.3" width="4" height="1.3" fill="#000"/><rect x="10" y="19.3" width="10" height="1.3" fill="#000"/><rect x="4" y="21.5" width="4" height="1.3" fill="#000"/><rect x="10" y="21.5" width="10" height="1.3" fill="#000"/><rect x="4" y="23.6" width="4" height="1.3" fill="#000"/><rect x="10" y="23.6" width="10" height="1.3" fill="#000"/><rect x="4" y="25.7" width="4" height="1.3" fill="#000"/><rect x="10" y="25.7" width="10" height="1.3" fill="#000"/></svg></div>
<div class="a" style="left:597px;top:160px;width:38px;height:39px;background:#ece9d8;border:1px solid #fff;border-right:2px solid #8a8678;border-bottom:2px solid #8a8678"></div>
<div class="a" style="left:600px;top:163px;width:29px;height:33px"><svg width="29" height="33" viewBox="0 0 29 33" shape-rendering="auto"><rect x="0" y="0" width="29" height="29" fill="#8c8a7e"/><rect x="2" y="2" width="25" height="25" fill="#e2dfd0"/><rect x="2" y="4" width="25" height="1.5" fill="#8c8a7e"/><rect x="3.6" y="2" width="1.5" height="25" fill="#8c8a7e"/><rect x="12" y="2" width="1" height="2" fill="#8c8a7e"/><rect x="20" y="2" width="1" height="2" fill="#8c8a7e"/><rect x="2" y="8" width="1.6" height="0.8" fill="#8c8a7e" opacity="0.6"/><rect x="2" y="11" width="1.6" height="0.8" fill="#8c8a7e" opacity="0.6"/><rect x="2" y="14" width="1.6" height="0.8" fill="#8c8a7e" opacity="0.6"/><rect x="2" y="17" width="1.6" height="0.8" fill="#8c8a7e" opacity="0.6"/><rect x="2" y="20" width="1.6" height="0.8" fill="#8c8a7e" opacity="0.6"/><rect x="2" y="23" width="1.6" height="0.8" fill="#8c8a7e" opacity="0.6"/><rect x="5" y="5.5" width="22" height="20" fill="#e8e6da"/><rect x="12" y="5.5" width="1.2" height="19" fill="#8c8a7e"/><rect x="20" y="5.5" width="1.2" height="19" fill="#8c8a7e"/><rect x="2" y="24.5" width="25" height="4.5" fill="#8c8a7e"/><path d="M8.5 18 L16.5 25 L24 18 L25.5 19.5 L16.5 27 L7 19.5 Z" fill="#8c8a7e"/><path d="M8 28 L11 31 L14 28 Z M19 28 L22 31 L25 28 Z" fill="#8c8a7e"/></svg></div>
<div class="a" style="left:636px;top:160px;width:38px;height:39px;background:#ece9d8;border:1px solid #fff;border-right:2px solid #8a8678;border-bottom:2px solid #8a8678"></div>
<div class="a" style="left:639px;top:163px;width:29px;height:29px"><svg width="29" height="29" viewBox="0 0 29 29" shape-rendering="auto"><rect x="0" y="0" width="29" height="29" fill="#8c8a7e"/><rect x="2" y="2" width="25" height="25" fill="#e2dfd0"/><rect x="2" y="4" width="25" height="1.5" fill="#8c8a7e"/><rect x="3.6" y="2" width="1.5" height="25" fill="#8c8a7e"/><rect x="12" y="2" width="1" height="2" fill="#8c8a7e"/><rect x="20" y="2" width="1" height="2" fill="#8c8a7e"/><rect x="2" y="8" width="1.6" height="0.8" fill="#8c8a7e" opacity="0.6"/><rect x="2" y="11" width="1.6" height="0.8" fill="#8c8a7e" opacity="0.6"/><rect x="2" y="14" width="1.6" height="0.8" fill="#8c8a7e" opacity="0.6"/><rect x="2" y="17" width="1.6" height="0.8" fill="#8c8a7e" opacity="0.6"/><rect x="2" y="20" width="1.6" height="0.8" fill="#8c8a7e" opacity="0.6"/><rect x="2" y="23" width="1.6" height="0.8" fill="#8c8a7e" opacity="0.6"/><rect x="5" y="5.5" width="16" height="21.5" fill="#e8e6da"/><rect x="12" y="5.5" width="1.2" height="21.5" fill="#8c8a7e"/><rect x="20.5" y="2" width="7" height="25" fill="#8c8a7e"/><rect x="21.5" y="3" width="5" height="1" fill="#e2dfd0"/><rect x="21.5" y="8" width="5" height="1" fill="#e2dfd0"/><rect x="21.5" y="14" width="5" height="1" fill="#e2dfd0"/><rect x="21.5" y="19" width="5" height="1" fill="#e2dfd0"/><rect x="21.5" y="23" width="5" height="1" fill="#e2dfd0"/><path d="M17 9.6 L22 6 V13 Z M17 21.4 L22 18 V25 Z" fill="#8c8a7e"/></svg></div>
<div class="a" style="left:341px;top:205px;width:600px;height:101px;border:1px solid #aaa698;border-right:none;box-shadow:inset 1px 1px 0 #fff, 0 1px 0 #fff"></div>
<div class="t" style="left:348px;top:198px;padding:0 2px;background:#ece9d8">Summary</div>
<div class="t" style="left:351px;top:218px;letter-spacing:-0.12px">100 Samples (1 cycle x 100 samples/cycle)</div>
<div class="t" style="left:351px;top:244px;letter-spacing:-0.12px">1 Cycle equals 100 samples</div>
<div class="t" style="left:351px;top:270px;letter-spacing:-0.12px">Sequential Selection</div>
<div class="a" style="left:331px;top:312px;width:594px;height:245px;background:#fff"></div>
<div class="a" style="left:331px;top:331px;width:42px;height:226px;background:#ece9d8"></div>
<div class="a" style="left:331px;top:312px;width:42px;height:19px;background:#ece9d8;border-right:1px solid #1a1a1a;border-bottom:1px solid #1a1a1a;border-top:1px solid #fbfbf6;border-left:1px solid #fbfbf6;box-shadow:inset -1px -1px 0 #c4c1b0"></div>
<div class="t" style="left:331px;width:42px;text-align:center;top:314px;font-weight:bold;font-size:11.5px;line-height:17px">ID</div>
<div class="a" style="left:373px;top:312px;width:75px;height:19px;background:#ece9d8;border-right:1px solid #1a1a1a;border-bottom:1px solid #1a1a1a;border-top:1px solid #fbfbf6;border-left:1px solid #fbfbf6;box-shadow:inset -1px -1px 0 #c4c1b0"></div>
<div class="t" style="left:373px;width:75px;text-align:center;top:314px;font-weight:bold;font-size:11.5px;line-height:17px">Weight</div>
<div class="a" style="left:448px;top:312px;width:75px;height:19px;background:#ece9d8;border-right:1px solid #1a1a1a;border-bottom:1px solid #1a1a1a;border-top:1px solid #fbfbf6;border-left:1px solid #fbfbf6;box-shadow:inset -1px -1px 0 #c4c1b0"></div>
<div class="t" style="left:448px;width:75px;text-align:center;top:314px;font-weight:bold;font-size:11.5px;line-height:17px">Nested</div>
<div class="a" style="left:523px;top:312px;width:75px;height:19px;background:#ece9d8;border-right:1px solid #1a1a1a;border-bottom:1px solid #1a1a1a;border-top:1px solid #fbfbf6;border-left:1px solid #fbfbf6;box-shadow:inset -1px -1px 0 #c4c1b0"></div>
<div class="t" style="left:523px;width:75px;text-align:center;top:314px;font-weight:bold;font-size:11.5px;line-height:17px">Procedure</div>
<div class="a" style="left:598px;top:312px;width:75px;height:19px;background:#ece9d8;border-right:1px solid #1a1a1a;border-bottom:1px solid #1a1a1a;border-top:1px solid #fbfbf6;border-left:1px solid #fbfbf6;box-shadow:inset -1px -1px 0 #c4c1b0"></div>
<div class="t" style="left:598px;width:75px;text-align:center;top:314px;font-weight:bold;font-size:11.5px;line-height:17px">Tone</div>
<div class="a" style="left:673px;top:312px;width:75px;height:19px;background:#ece9d8;border-right:1px solid #1a1a1a;border-bottom:1px solid #1a1a1a;border-top:1px solid #fbfbf6;border-left:1px solid #fbfbf6;box-shadow:inset -1px -1px 0 #c4c1b0"></div>
<div class="t" style="left:673px;width:75px;text-align:center;top:314px;font-weight:bold;font-size:11.5px;line-height:17px">CorrectAns</div>
<div class="a" style="left:748px;top:312px;width:75px;height:19px;background:#ece9d8;border-right:1px solid #1a1a1a;border-bottom:1px solid #1a1a1a;border-top:1px solid #fbfbf6;border-left:1px solid #fbfbf6;box-shadow:inset -1px -1px 0 #c4c1b0"></div>
<div class="t" style="left:748px;width:75px;text-align:center;top:314px;font-weight:bold;font-size:11.5px;line-height:17px">Trigger</div>
<div class="a" style="left:823px;top:312px;width:75px;height:19px;background:#ece9d8;border-right:1px solid #1a1a1a;border-bottom:1px solid #1a1a1a;border-top:1px solid #fbfbf6;border-left:1px solid #fbfbf6;box-shadow:inset -1px -1px 0 #c4c1b0"></div>
<div class="t" style="left:826px;top:314px;font-weight:bold;font-size:11.5px;line-height:17px">CorrectAn...</div>
<div class="a" style="left:898px;top:312px;width:62px;height:19px;background:#ece9d8;border-right:1px solid #1a1a1a;border-bottom:1px solid #1a1a1a;border-top:1px solid #fbfbf6;border-left:1px solid #fbfbf6;box-shadow:inset -1px -1px 0 #c4c1b0"></div>
<div class="t" style="left:901px;top:314px;font-weight:bold;font-size:11.5px;line-height:17px">Trial</div>
<div class="a" style="left:331px;top:331px;width:42px;height:16px;background:#ece9d8;border-right:1px solid #1a1a1a;border-bottom:1px solid #1a1a1a;border-top:1px solid #fbfbf6;border-left:1px solid #fbfbf6;box-shadow:inset -1px -1px 0 #c4c1b0"></div>
<div class="t" style="left:334px;top:331px">1</div>
<div class="a" style="left:373px;top:347px;width:552px;height:1px;background:#c0c0c0"></div>
<div class="t" style="left:373px;width:70px;text-align:right;top:331px">1</div>
<div class="t" style="left:451px;top:331px;letter-spacing:-0.1px"></div>
<div class="t" style="left:526px;top:331px;letter-spacing:-0.1px">TrialProc</div>
<div class="t" style="left:601px;top:331px;letter-spacing:-0.1px">Standard</div>
<div class="t" style="left:676px;top:331px;letter-spacing:-0.1px">1</div>
<div class="t" style="left:751px;top:331px;letter-spacing:-0.1px">1</div>
<div class="t" style="left:826px;top:331px;letter-spacing:-0.1px">7</div>
<div class="t" style="left:901px;top:331px;letter-spacing:-0.1px">1</div>
<div class="a" style="left:331px;top:347px;width:42px;height:16px;background:#ece9d8;border-right:1px solid #1a1a1a;border-bottom:1px solid #1a1a1a;border-top:1px solid #fbfbf6;border-left:1px solid #fbfbf6;box-shadow:inset -1px -1px 0 #c4c1b0"></div>
<div class="t" style="left:334px;top:347px">2</div>
<div class="a" style="left:373px;top:363px;width:552px;height:1px;background:#c0c0c0"></div>
<div class="t" style="left:373px;width:70px;text-align:right;top:347px">1</div>
<div class="t" style="left:451px;top:347px;letter-spacing:-0.1px"></div>
<div class="t" style="left:526px;top:347px;letter-spacing:-0.1px">TrialProc</div>
<div class="t" style="left:601px;top:347px;letter-spacing:-0.1px">Standard</div>
<div class="t" style="left:676px;top:347px;letter-spacing:-0.1px">1</div>
<div class="t" style="left:751px;top:347px;letter-spacing:-0.1px">1</div>
<div class="t" style="left:826px;top:347px;letter-spacing:-0.1px">7</div>
<div class="t" style="left:901px;top:347px;letter-spacing:-0.1px">2</div>
<div class="a" style="left:331px;top:363px;width:42px;height:16px;background:#ece9d8;border-right:1px solid #1a1a1a;border-bottom:1px solid #1a1a1a;border-top:1px solid #fbfbf6;border-left:1px solid #fbfbf6;box-shadow:inset -1px -1px 0 #c4c1b0"></div>
<div class="t" style="left:334px;top:363px">3</div>
<div class="a" style="left:373px;top:379px;width:552px;height:1px;background:#c0c0c0"></div>
<div class="t" style="left:373px;width:70px;text-align:right;top:363px">1</div>
<div class="t" style="left:451px;top:363px;letter-spacing:-0.1px"></div>
<div class="t" style="left:526px;top:363px;letter-spacing:-0.1px">TrialProc</div>
<div class="t" style="left:601px;top:363px;letter-spacing:-0.1px">Standard</div>
<div class="t" style="left:676px;top:363px;letter-spacing:-0.1px">1</div>
<div class="t" style="left:751px;top:363px;letter-spacing:-0.1px">1</div>
<div class="t" style="left:826px;top:363px;letter-spacing:-0.1px">7</div>
<div class="t" style="left:901px;top:363px;letter-spacing:-0.1px">3</div>
<div class="a" style="left:331px;top:379px;width:42px;height:16px;background:#ece9d8;border-right:1px solid #1a1a1a;border-bottom:1px solid #1a1a1a;border-top:1px solid #fbfbf6;border-left:1px solid #fbfbf6;box-shadow:inset -1px -1px 0 #c4c1b0"></div>
<div class="t" style="left:334px;top:379px">4</div>
<div class="a" style="left:373px;top:395px;width:552px;height:1px;background:#c0c0c0"></div>
<div class="t" style="left:373px;width:70px;text-align:right;top:379px">1</div>
<div class="t" style="left:451px;top:379px;letter-spacing:-0.1px"></div>
<div class="t" style="left:526px;top:379px;letter-spacing:-0.1px">TrialProc2</div>
<div class="t" style="left:601px;top:379px;letter-spacing:-0.1px">Deviant</div>
<div class="t" style="left:676px;top:379px;letter-spacing:-0.1px">2</div>
<div class="t" style="left:751px;top:379px;letter-spacing:-0.1px">2</div>
<div class="t" style="left:826px;top:379px;letter-spacing:-0.1px">8</div>
<div class="t" style="left:901px;top:379px;letter-spacing:-0.1px">4</div>
<div class="a" style="left:331px;top:395px;width:42px;height:16px;background:#ece9d8;border-right:1px solid #1a1a1a;border-bottom:1px solid #1a1a1a;border-top:1px solid #fbfbf6;border-left:1px solid #fbfbf6;box-shadow:inset -1px -1px 0 #c4c1b0"></div>
<div class="t" style="left:334px;top:395px">5</div>
<div class="a" style="left:373px;top:411px;width:552px;height:1px;background:#c0c0c0"></div>
<div class="t" style="left:373px;width:70px;text-align:right;top:395px">1</div>
<div class="t" style="left:451px;top:395px;letter-spacing:-0.1px"></div>
<div class="t" style="left:526px;top:395px;letter-spacing:-0.1px">TrialProc</div>
<div class="t" style="left:601px;top:395px;letter-spacing:-0.1px">Standard</div>
<div class="t" style="left:676px;top:395px;letter-spacing:-0.1px">1</div>
<div class="t" style="left:751px;top:395px;letter-spacing:-0.1px">1</div>
<div class="t" style="left:826px;top:395px;letter-spacing:-0.1px">7</div>
<div class="t" style="left:901px;top:395px;letter-spacing:-0.1px">5</div>
<div class="a" style="left:331px;top:411px;width:42px;height:16px;background:#ece9d8;border-right:1px solid #1a1a1a;border-bottom:1px solid #1a1a1a;border-top:1px solid #fbfbf6;border-left:1px solid #fbfbf6;box-shadow:inset -1px -1px 0 #c4c1b0"></div>
<div class="t" style="left:334px;top:411px">6</div>
<div class="a" style="left:373px;top:427px;width:552px;height:1px;background:#c0c0c0"></div>
<div class="t" style="left:373px;width:70px;text-align:right;top:411px">1</div>
<div class="t" style="left:451px;top:411px;letter-spacing:-0.1px"></div>
<div class="t" style="left:526px;top:411px;letter-spacing:-0.1px">TrialProc</div>
<div class="t" style="left:601px;top:411px;letter-spacing:-0.1px">Standard</div>
<div class="t" style="left:676px;top:411px;letter-spacing:-0.1px">1</div>
<div class="t" style="left:751px;top:411px;letter-spacing:-0.1px">1</div>
<div class="t" style="left:826px;top:411px;letter-spacing:-0.1px">7</div>
<div class="t" style="left:901px;top:411px;letter-spacing:-0.1px">6</div>
<div class="a" style="left:331px;top:427px;width:42px;height:16px;background:#ece9d8;border-right:1px solid #1a1a1a;border-bottom:1px solid #1a1a1a;border-top:1px solid #fbfbf6;border-left:1px solid #fbfbf6;box-shadow:inset -1px -1px 0 #c4c1b0"></div>
<div class="t" style="left:334px;top:427px">7</div>
<div class="a" style="left:373px;top:443px;width:552px;height:1px;background:#c0c0c0"></div>
<div class="t" style="left:373px;width:70px;text-align:right;top:427px">1</div>
<div class="t" style="left:451px;top:427px;letter-spacing:-0.1px"></div>
<div class="t" style="left:526px;top:427px;letter-spacing:-0.1px">TrialProc</div>
<div class="t" style="left:601px;top:427px;letter-spacing:-0.1px">Standard</div>
<div class="t" style="left:676px;top:427px;letter-spacing:-0.1px">1</div>
<div class="t" style="left:751px;top:427px;letter-spacing:-0.1px">1</div>
<div class="t" style="left:826px;top:427px;letter-spacing:-0.1px">7</div>
<div class="t" style="left:901px;top:427px;letter-spacing:-0.1px">7</div>
<div class="a" style="left:331px;top:443px;width:42px;height:16px;background:#ece9d8;border-right:1px solid #1a1a1a;border-bottom:1px solid #1a1a1a;border-top:1px solid #fbfbf6;border-left:1px solid #fbfbf6;box-shadow:inset -1px -1px 0 #c4c1b0"></div>
<div class="t" style="left:334px;top:443px">8</div>
<div class="a" style="left:373px;top:459px;width:552px;height:1px;background:#c0c0c0"></div>
<div class="t" style="left:373px;width:70px;text-align:right;top:443px">1</div>
<div class="t" style="left:451px;top:443px;letter-spacing:-0.1px"></div>
<div class="t" style="left:526px;top:443px;letter-spacing:-0.1px">TrialProc</div>
<div class="t" style="left:601px;top:443px;letter-spacing:-0.1px">Standard</div>
<div class="t" style="left:676px;top:443px;letter-spacing:-0.1px">1</div>
<div class="t" style="left:751px;top:443px;letter-spacing:-0.1px">1</div>
<div class="t" style="left:826px;top:443px;letter-spacing:-0.1px">7</div>
<div class="t" style="left:901px;top:443px;letter-spacing:-0.1px">8</div>
<div class="a" style="left:331px;top:459px;width:42px;height:16px;background:#ece9d8;border-right:1px solid #1a1a1a;border-bottom:1px solid #1a1a1a;border-top:1px solid #fbfbf6;border-left:1px solid #fbfbf6;box-shadow:inset -1px -1px 0 #c4c1b0"></div>
<div class="t" style="left:334px;top:459px">9</div>
<div class="a" style="left:373px;top:475px;width:552px;height:1px;background:#c0c0c0"></div>
<div class="t" style="left:373px;width:70px;text-align:right;top:459px">1</div>
<div class="t" style="left:451px;top:459px;letter-spacing:-0.1px"></div>
<div class="t" style="left:526px;top:459px;letter-spacing:-0.1px">TrialProc</div>
<div class="t" style="left:601px;top:459px;letter-spacing:-0.1px">Standard</div>
<div class="t" style="left:676px;top:459px;letter-spacing:-0.1px">1</div>
<div class="t" style="left:751px;top:459px;letter-spacing:-0.1px">1</div>
<div class="t" style="left:826px;top:459px;letter-spacing:-0.1px">7</div>
<div class="t" style="left:901px;top:459px;letter-spacing:-0.1px">9</div>
<div class="a" style="left:331px;top:475px;width:42px;height:16px;background:#ece9d8;border-right:1px solid #1a1a1a;border-bottom:1px solid #1a1a1a;border-top:1px solid #fbfbf6;border-left:1px solid #fbfbf6;box-shadow:inset -1px -1px 0 #c4c1b0"></div>
<div class="t" style="left:334px;top:475px">10</div>
<div class="a" style="left:373px;top:491px;width:552px;height:1px;background:#c0c0c0"></div>
<div class="t" style="left:373px;width:70px;text-align:right;top:475px">1</div>
<div class="t" style="left:451px;top:475px;letter-spacing:-0.1px"></div>
<div class="t" style="left:526px;top:475px;letter-spacing:-0.1px">TrialProc2</div>
<div class="t" style="left:601px;top:475px;letter-spacing:-0.1px">Deviant</div>
<div class="t" style="left:676px;top:475px;letter-spacing:-0.1px">2</div>
<div class="t" style="left:751px;top:475px;letter-spacing:-0.1px">2</div>
<div class="t" style="left:826px;top:475px;letter-spacing:-0.1px">8</div>
<div class="t" style="left:901px;top:475px;letter-spacing:-0.1px">10</div>
<div class="a" style="left:331px;top:491px;width:42px;height:16px;background:#ece9d8;border-right:1px solid #1a1a1a;border-bottom:1px solid #1a1a1a;border-top:1px solid #fbfbf6;border-left:1px solid #fbfbf6;box-shadow:inset -1px -1px 0 #c4c1b0"></div>
<div class="t" style="left:334px;top:491px">11</div>
<div class="a" style="left:373px;top:507px;width:552px;height:1px;background:#c0c0c0"></div>
<div class="t" style="left:373px;width:70px;text-align:right;top:491px">1</div>
<div class="t" style="left:451px;top:491px;letter-spacing:-0.1px"></div>
<div class="t" style="left:526px;top:491px;letter-spacing:-0.1px">TrialProc</div>
<div class="t" style="left:601px;top:491px;letter-spacing:-0.1px">Standard</div>
<div class="t" style="left:676px;top:491px;letter-spacing:-0.1px">1</div>
<div class="t" style="left:751px;top:491px;letter-spacing:-0.1px">1</div>
<div class="t" style="left:826px;top:491px;letter-spacing:-0.1px">7</div>
<div class="t" style="left:901px;top:491px;letter-spacing:-0.1px">11</div>
<div class="a" style="left:331px;top:507px;width:42px;height:16px;background:#ece9d8;border-right:1px solid #1a1a1a;border-bottom:1px solid #1a1a1a;border-top:1px solid #fbfbf6;border-left:1px solid #fbfbf6;box-shadow:inset -1px -1px 0 #c4c1b0"></div>
<div class="t" style="left:334px;top:507px">12</div>
<div class="a" style="left:373px;top:523px;width:552px;height:1px;background:#c0c0c0"></div>
<div class="t" style="left:373px;width:70px;text-align:right;top:507px">1</div>
<div class="t" style="left:451px;top:507px;letter-spacing:-0.1px"></div>
<div class="t" style="left:526px;top:507px;letter-spacing:-0.1px">TrialProc</div>
<div class="t" style="left:601px;top:507px;letter-spacing:-0.1px">Standard</div>
<div class="t" style="left:676px;top:507px;letter-spacing:-0.1px">1</div>
<div class="t" style="left:751px;top:507px;letter-spacing:-0.1px">1</div>
<div class="t" style="left:826px;top:507px;letter-spacing:-0.1px">7</div>
<div class="t" style="left:901px;top:507px;letter-spacing:-0.1px">12</div>
<div class="a" style="left:331px;top:523px;width:42px;height:16px;background:#ece9d8;border-right:1px solid #1a1a1a;border-bottom:1px solid #1a1a1a;border-top:1px solid #fbfbf6;border-left:1px solid #fbfbf6;box-shadow:inset -1px -1px 0 #c4c1b0"></div>
<div class="t" style="left:334px;top:523px">13</div>
<div class="a" style="left:373px;top:539px;width:552px;height:1px;background:#c0c0c0"></div>
<div class="t" style="left:373px;width:70px;text-align:right;top:523px">1</div>
<div class="t" style="left:451px;top:523px;letter-spacing:-0.1px"></div>
<div class="t" style="left:526px;top:523px;letter-spacing:-0.1px">TrialProc</div>
<div class="t" style="left:601px;top:523px;letter-spacing:-0.1px">Standard</div>
<div class="t" style="left:676px;top:523px;letter-spacing:-0.1px">1</div>
<div class="t" style="left:751px;top:523px;letter-spacing:-0.1px">1</div>
<div class="t" style="left:826px;top:523px;letter-spacing:-0.1px">7</div>
<div class="t" style="left:901px;top:523px;letter-spacing:-0.1px">13</div>
<div class="a" style="left:331px;top:539px;width:42px;height:16px;background:#ece9d8;border-right:1px solid #1a1a1a;border-bottom:1px solid #1a1a1a;border-top:1px solid #fbfbf6;border-left:1px solid #fbfbf6;box-shadow:inset -1px -1px 0 #c4c1b0"></div>
<div class="t" style="left:334px;top:539px">14</div>
<div class="a" style="left:373px;top:555px;width:552px;height:1px;background:#c0c0c0"></div>
<div class="t" style="left:373px;width:70px;text-align:right;top:539px">1</div>
<div class="t" style="left:451px;top:539px;letter-spacing:-0.1px"></div>
<div class="t" style="left:526px;top:539px;letter-spacing:-0.1px">TrialProc</div>
<div class="t" style="left:601px;top:539px;letter-spacing:-0.1px">Standard</div>
<div class="t" style="left:676px;top:539px;letter-spacing:-0.1px">1</div>
<div class="t" style="left:751px;top:539px;letter-spacing:-0.1px">1</div>
<div class="t" style="left:826px;top:539px;letter-spacing:-0.1px">7</div>
<div class="t" style="left:901px;top:539px;letter-spacing:-0.1px">14</div>
<div class="a" style="left:448px;top:331px;width:1px;height:226px;background:#c0c0c0"></div>
<div class="a" style="left:523px;top:331px;width:1px;height:226px;background:#c0c0c0"></div>
<div class="a" style="left:597px;top:331px;width:1px;height:226px;background:#101080"></div>
<div class="a" style="left:673px;top:331px;width:1px;height:226px;background:#c0c0c0"></div>
<div class="a" style="left:748px;top:331px;width:1px;height:226px;background:#c0c0c0"></div>
<div class="a" style="left:823px;top:331px;width:1px;height:226px;background:#c0c0c0"></div>
<div class="a" style="left:898px;top:331px;width:1px;height:226px;background:#c0c0c0"></div>
<div class="a" style="left:960px;top:331px;width:1px;height:226px;background:#c0c0c0"></div>
<div class="a" style="left:373px;top:331px;width:77px;height:18px;border:2px solid #2a2a2a"></div>
<div class="a" style="left:447px;top:346px;width:4px;height:4px;background:#2a2a2a"></div>
<div class="a" style="left:329px;top:557px;width:596px;height:16px;background:linear-gradient(#f0efe8,#fbfbf8)"></div>
<div class="a" style="left:332px;top:558px;width:15px;height:16px;background:linear-gradient(90deg,#cbdafc,#b9cdf8);border:1px solid #eef2fd;border-radius:3px;box-shadow:inset -1px -1px 0 #a6b9e6"></div>
<svg class="a" style="left:332px;top:558px" width="15" height="16"><path d="M9 4 L5 8 L9 12" fill="none" stroke="#4d6185" stroke-width="2"/></svg>
<div class="a" style="left:349px;top:558px;width:524px;height:16px;background:linear-gradient(90deg,#cbdafc,#b9cdf8);border:1px solid #eef2fd;border-radius:3px;box-shadow:inset -1px -1px 0 #a6b9e6"></div>
<svg class="a" style="left:605px;top:558px" width="12" height="15"><path d="M2.5 4 V11 M4.5 4 V11 M6.5 4 V11 M8.5 4 V11" stroke="#8aa0d8" stroke-width="1"/></svg>
</body></html>
